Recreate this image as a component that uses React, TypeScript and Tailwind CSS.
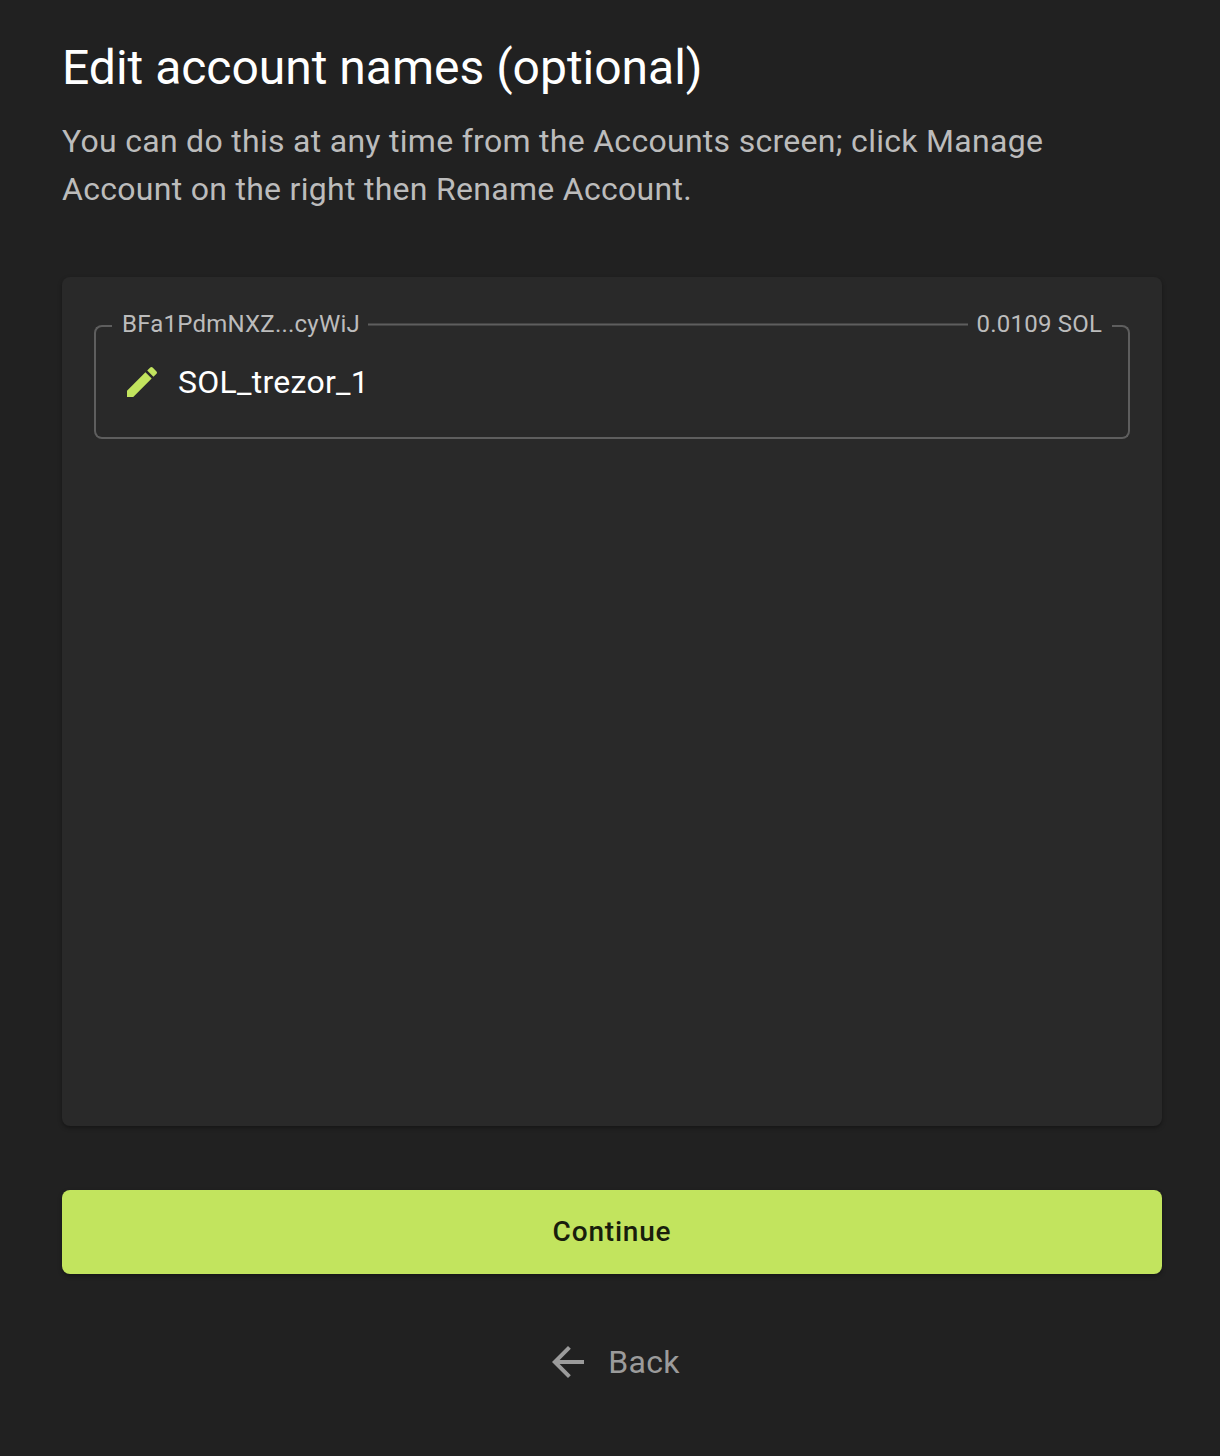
export default function App() {
  return (
    <main className="flex h-[1456px] w-[1220px] flex-col bg-[#212121] pl-[62px] pr-[58px] pt-[38px] font-['Roboto',sans-serif] text-white">
      <h1 className="h-[60px] whitespace-nowrap text-[48px] leading-[60px] tracking-[-0.01px]">Edit account names (optional)</h1>
      <p className="mt-[19px] w-[1080px] text-[32px] leading-[48px] tracking-[0.29px] text-[#bcbcbc]">
        You can do this at any time from the Accounts screen; click Manage
        <br />
        Account on the right then Rename Account.
      </p>
      <section className="mt-[64px] h-[849px] rounded-[8px] bg-[#292929] px-8 pt-[31px] shadow-[0_2px_4px_rgba(0,0,0,0.35)]">
        <div className="flex h-8 items-center text-[24px] leading-8 tracking-[0.22px] text-[#bcbcbc]">
          <span className="mt-[17px] h-[15px] w-[18px] rounded-tl-[8px] border-l-2 border-t-2 border-[#5e5e5e]" />
          <span className="ml-[10px] w-[246px] whitespace-nowrap">BFa1PdmNXZ...cyWiJ</span>
          <span className="h-[3px] w-[600px] border-y border-[#444444] bg-[#5e5e5e]" />
          <span className="ml-[8.5px] w-[135.5px] whitespace-nowrap">0.0109 SOL</span>
          <span className="mt-[17px] h-[15px] w-[18px] rounded-tr-[8px] border-r-2 border-t-2 border-[#5e5e5e]" />
        </div>
        <div className="flex h-[99px] items-start rounded-b-[8px] border-x-2 border-b-2 border-[#5e5e5e] pl-[26px] pt-[22px]">
          <svg className="size-[40px]" viewBox="0 0 24 24" fill="#c2e45e">
            <path d="M3 17.25V21h3.75L17.81 9.94l-3.75-3.75L3 17.25zM20.71 7.04a1 1 0 0 0 0-1.41l-2.34-2.34a1 1 0 0 0-1.41 0l-1.83 1.83 3.75 3.75 1.83-1.83z" />
          </svg>
          <span className="ml-4 text-[32px] leading-[40px] tracking-[0.27px]">SOL_trezor_1</span>
        </div>
      </section>
      <button className="mt-16 h-[84px] rounded-[8px] bg-[#c2e45e] text-[28px] font-medium tracking-[0.8px] text-[#191e0c] shadow-[0_2px_4px_rgba(0,0,0,0.35)]">
        Continue
      </button>
      <button className="mt-[64px] flex h-12 items-center justify-center text-[32px] tracking-[0.28px] text-[#9b9b9b]">
        <svg className="mr-4 size-[48px]" viewBox="0 0 24 24" fill="currentColor">
          <path d="M20 11H7.83l5.59-5.59L12 4l-8 8 8 8 1.41-1.41L7.83 13H20v-2z" />
        </svg>
        Back
      </button>
    </main>
  )
}
